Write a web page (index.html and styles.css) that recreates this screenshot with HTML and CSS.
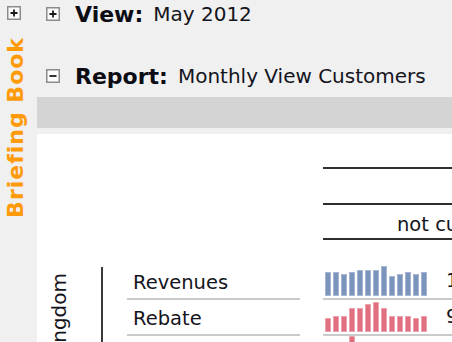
FILE: index.html
```html
<html>
<head>
	<title>Briefing Book</title>
	<meta charset="utf-8">
	<link rel="stylesheet" href="styles.css">
</head>
<body>
<div class="page">
	<div class="book">
		<svg class="toggle" width="14" height="14" viewBox="0 0 14 14">
			<rect x="0.75" y="0.75" width="12.5" height="12.5" fill="#fbfbfb" stroke="#8c8c8c" stroke-width="1.5"/>
			<path d="M3.5 7H10.5M7 3.5V10.5" stroke="#1a1a1a" stroke-width="1.8"/>
		</svg>
		<div class="book_title">Briefing Book</div>
	</div>

	<div class="main">
		<div class="section">
			<svg class="toggle" width="14" height="14" viewBox="0 0 14 14">
				<rect x="0.75" y="0.75" width="12.5" height="12.5" fill="#fbfbfb" stroke="#8c8c8c" stroke-width="1.5"/>
				<path d="M3.5 7H10.5M7 3.5V10.5" stroke="#1a1a1a" stroke-width="1.8"/>
			</svg>
			<span class="section_label">View:</span>
			<span class="section_value">May 2012</span>
		</div>
		<div class="section section-report">
			<svg class="toggle" width="14" height="14" viewBox="0 0 14 14">
				<rect x="0.75" y="0.75" width="12.5" height="12.5" fill="#fbfbfb" stroke="#8c8c8c" stroke-width="1.5"/>
				<path d="M3.5 7H10.5" stroke="#1a1a1a" stroke-width="1.8"/>
			</svg>
			<span class="section_label">Report:</span>
			<span class="section_value">Monthly View Customers</span>
		</div>

		<div class="toolbar"></div>

		<div class="report">
			<div class="col_head">
				<div class="head_row"></div>
				<div class="head_row"></div>
				<div class="head_row head_text">not cumulated</div>
			</div>

			<div class="rows">
				<div class="country"><span class="country_name">United Kingdom</span></div>

				<div class="row_label">Revenues</div>
				<div class="row_chart">
					<div class="bars bars-blue">
						<i style="height:22px"></i><i style="height:22px"></i><i style="height:20px"></i>
						<i style="height:22px"></i><i style="height:24px"></i><i style="height:24px"></i>
						<i style="height:24px"></i><i style="height:28px"></i><i style="height:18px"></i>
						<i style="height:20px"></i><i style="height:22px"></i><i style="height:20px"></i>
						<i style="height:22px"></i>
					</div>
					<span class="row_value">1,482,310</span>
				</div>

				<div class="row_label">Rebate</div>
				<div class="row_chart">
					<div class="bars bars-red">
						<i style="height:12px"></i><i style="height:14px"></i><i style="height:14px"></i>
						<i style="height:22px"></i><i style="height:22px"></i><i style="height:26px"></i>
						<i style="height:28px"></i><i style="height:22px"></i><i style="height:14px"></i>
						<i style="height:14px"></i><i style="height:14px"></i><i style="height:12px"></i>
						<i style="height:14px"></i>
					</div>
					<span class="row_value">98,214</span>
				</div>

				<div class="row_label">Discount</div>
				<div class="row_chart">
					<div class="bars bars-red">
						<i style="height:10px"></i><i style="height:12px"></i><i style="height:14px"></i>
						<i style="height:30px"></i><i style="height:18px"></i><i style="height:16px"></i>
						<i style="height:20px"></i><i style="height:14px"></i><i style="height:12px"></i>
						<i style="height:12px"></i><i style="height:16px"></i><i style="height:10px"></i>
						<i style="height:12px"></i>
					</div>
					<span class="row_value">41,007</span>
				</div>
			</div>
		</div>
	</div>
</div>
</body>
</html>
```

FILE: styles.css
```css
html, body {
	margin: 0;
	height: 342px;
	overflow: hidden;
	background: #f0f0f0;
	font-family: "DejaVu Sans", Verdana, sans-serif;
	color: #141420;
}

.page {
	display: flex;
	height: 342px;
}

.toggle {
	display: block;
	flex: none;
}

/* briefing book side strip */
.book {
	width: 37px;
	flex: none;
	padding: 6px 0 0 7px;
	box-sizing: border-box;
	background: #f0f0f0;
}

.book_title {
	writing-mode: vertical-rl;
	transform: rotate(180deg);
	margin-top: 17px;
	margin-left: -2px;
	font-size: 22px;
	font-weight: bold;
	letter-spacing: 1px;
	line-height: 22px;
	color: #ff9a0a;
}

/* main column */
.main {
	flex: 1;
	min-width: 0;
	display: flex;
	flex-direction: column;
}

.section {
	display: flex;
	align-items: center;
	height: 28px;
	padding-left: 9px;
}

.section-report {
	margin-top: 34px;
}

.section_label {
	margin-left: 15px;
	font-size: 22px;
	font-weight: bold;
	color: #0c0c14;
}

.section_value {
	margin-left: 10px;
	font-size: 20px;
}

.toolbar {
	height: 31px;
	margin-top: 7px;
	margin-bottom: 6px;
	background: #d4d4d4;
}

.report {
	flex: 1;
	background: #fff;
	overflow: hidden;
	font-size: 19.5px;
}

/* column header lines */
.col_head {
	margin-left: 286px;
}

.head_row {
	height: 33px;
	border-bottom: 2px solid #2e2e2e;
	white-space: nowrap;
	overflow: hidden;
}

.head_row:nth-child(2) {
	height: 34px;
}

.head_text {
	padding-left: 74px;
	line-height: 40px;
}

/* data rows */
.rows {
	display: grid;
	grid-template-columns: 66px 24px 173px 23px 1fr;
	grid-auto-rows: 36px;
	margin-top: 24px;
}

.country {
	grid-row: 1 / span 3;
	grid-column: 1;
	border-right: 2px solid #3a3a3a;
	margin-top: 3px;
	padding: 6px 0 0 13px;
}

.country_name {
	display: block;
	writing-mode: vertical-rl;
	transform: rotate(180deg);
	white-space: nowrap;
	font-size: 20px;
	line-height: 18px;
}

.row_label {
	grid-column: 3;
	display: flex;
	align-items: center;
	padding: 2px 0 0 6px;
	border-bottom: 2px solid #cacaca;
}

.row_chart {
	grid-column: 5;
	display: flex;
	align-items: flex-end;
	padding: 0 0 2px 2px;
	border-bottom: 2px solid #cacaca;
	white-space: nowrap;
}

.bars {
	display: flex;
	align-items: flex-end;
	gap: 2px;
}

.bars i {
	display: block;
	width: 4px;
	border: 1px solid;
}

.bars-blue i {
	background: #7a94bc;
	border-color: #a8b8d3;
}

.bars-red i {
	background: #e07080;
	border-color: #eea4ae;
}

.row_value {
	margin-left: 19px;
	align-self: center;
}
```
